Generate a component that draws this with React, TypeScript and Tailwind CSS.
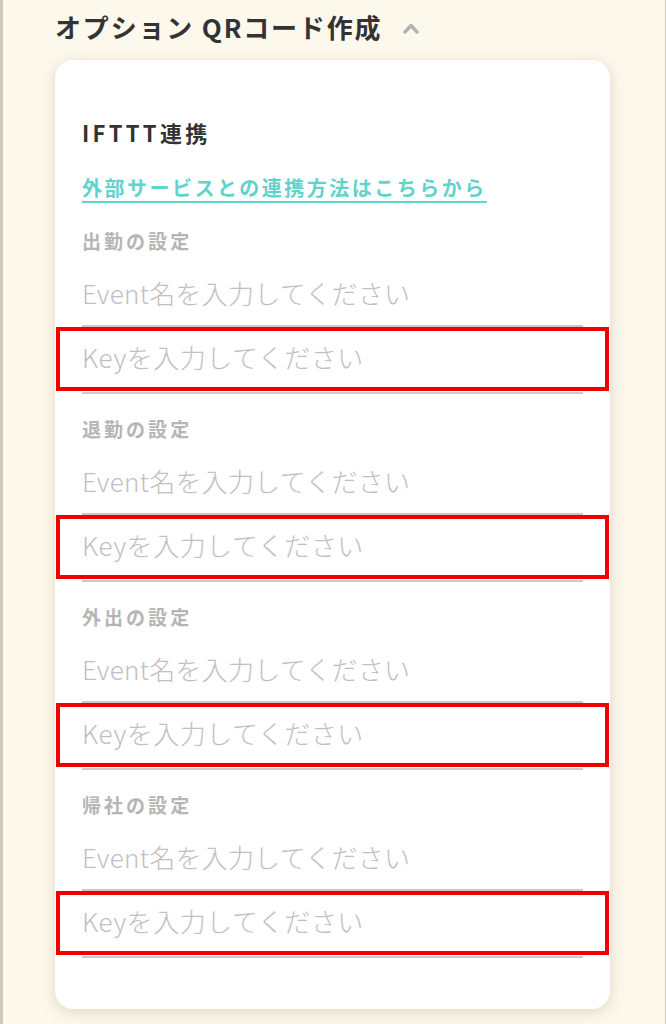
import React from "react";

interface Setting {
  label: string;
}

const settings: Setting[] = [
  { label: "出勤の設定" },
  { label: "退勤の設定" },
  { label: "外出の設定" },
  { label: "帰社の設定" },
];

const font = { fontFamily: '"Noto Sans CJK JP", "Noto Sans", sans-serif' };

export default function App() {
  return (
    <div
      className="h-[1024px] overflow-hidden bg-[#fcf8ec] border-l-[3px] border-r border-[#cfcabd] pl-[52px] pr-[55px] pt-[11px]"
      style={font}
    >
      {/* Section header */}
      <div className="flex items-center h-[32px]">
        <h2 className="text-[26px] font-bold text-[#333] tracking-[0.07em] leading-[32px]">
          オプション QRコード作成
        </h2>
        <svg className="ml-[20px] mt-[2px]" width="18" height="12" viewBox="0 0 18 12">
          <polyline
            points="3,10 9,3.5 15,10"
            fill="none"
            stroke="#b3b3b3"
            strokeWidth="3.5"
            strokeLinecap="round"
            strokeLinejoin="round"
          />
        </svg>
      </div>

      {/* Card */}
      <div className="mt-[17px] bg-white rounded-[18px] shadow-[0_3px_14px_rgba(150,130,90,0.28)] px-[27px] pt-[57px] pb-[51px]">
        <h3 className="text-[22px] font-bold text-[#333] tracking-[0.15em] leading-[30px]">
          IFTTT連携
        </h3>
        <a
          href="#"
          className="block mt-[26px] text-[20px] font-bold text-[#5fd3cc] underline underline-offset-[5px] decoration-2 tracking-[0.125em] leading-[30px]"
        >
          外部サービスとの連携方法はこちらから
        </a>

        {settings.map((s, i) => (
          <div key={s.label} className={i === 0 ? "mt-[26px]" : "mt-[23px]"}>
            <div className="text-[19px] font-bold text-[#b5b5b5] tracking-[0.16em] leading-[24px]">
              {s.label}
            </div>
            <input
              className="block w-full h-[74px] pt-[6px] border-b-2 border-[#cacaca] text-[26px] font-light tracking-[0.01em] text-[#555] placeholder:text-[#c0c0c0] outline-none bg-transparent"
              placeholder="Event名を入力してください"
            />
            <div className="relative">
              <input
                className="block w-full h-[67px] pb-[6px] border-b-2 border-[#cacaca] text-[26px] font-light tracking-[0.02em] text-[#555] placeholder:text-[#c0c0c0] outline-none bg-transparent"
                placeholder="Keyを入力してください"
              />
              {/* annotation box */}
              <div className="absolute top-0 bottom-[3px] -left-[26px] -right-[26px] border-4 border-[#ee0000] pointer-events-none" />
            </div>
          </div>
        ))}
      </div>
    </div>
  );
}
